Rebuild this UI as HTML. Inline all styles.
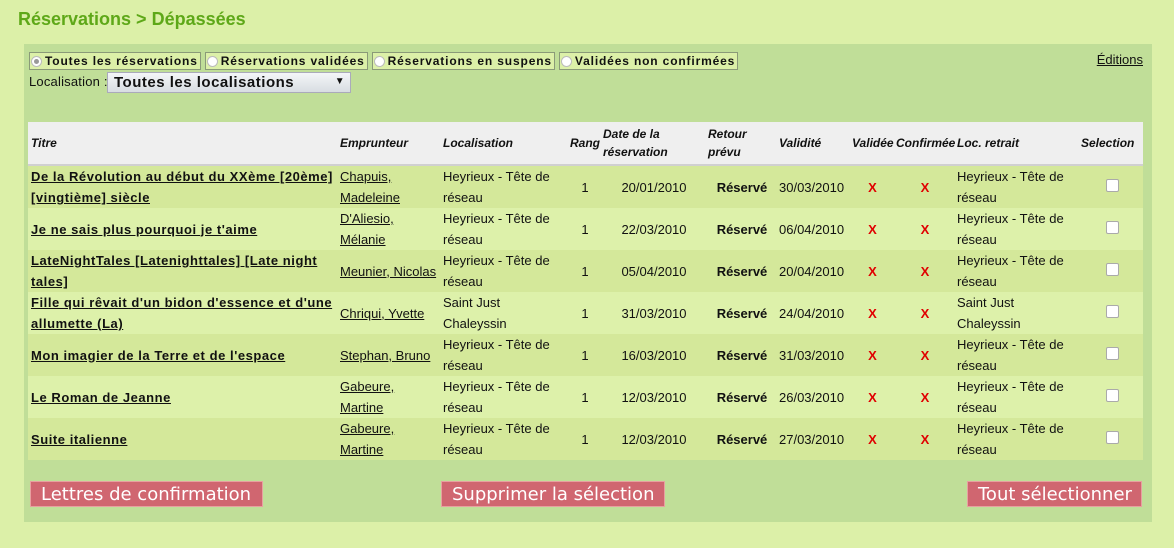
<!DOCTYPE html>
<html><head><meta charset="utf-8"><style>
body{margin:0;width:1174px;height:548px;background:#dcf0a8;font-family:"Liberation Sans",sans-serif;font-size:13px;color:#111;position:relative;overflow:hidden}
h1{position:absolute;left:18px;top:9px;margin:0;font-size:18px;color:#5ea818;font-weight:bold}
.panel{position:absolute;left:24px;top:44px;width:1128px;height:478px;background:#c0de98}
.tabs{position:absolute;left:5px;top:8px;display:flex;gap:4px}
.tab{border:1px solid #8a9a78;background:#dcf0a8;height:16px;line-height:16px;font-size:12px;font-weight:bold;padding:0 2px 0 1px;display:flex;align-items:center;letter-spacing:.85px}
.rad{width:11px;height:11px;border-radius:50%;background:#fff;border:1px solid #bbb;margin-right:3px;box-sizing:border-box;position:relative}
.rad.on::after{content:"";position:absolute;left:2px;top:2px;width:5px;height:5px;border-radius:50%;background:#999}
.loc{position:absolute;left:5px;top:30px;font-size:13px;letter-spacing:.2px}
.sel{position:absolute;left:83px;top:28px;width:244px;height:21px;background:linear-gradient(#f4f6f8,#d8dde2);border:1px solid #aab;box-sizing:border-box;font-size:15px;font-weight:bold;line-height:19px;padding-left:6px;letter-spacing:.5px}
.sel span{position:absolute;right:2px;top:1px;width:16px;height:16px;font-size:10px;line-height:16px;text-align:center}
.ed{position:absolute;right:9px;top:8px;text-decoration:underline;font-size:13px}
table{position:absolute;left:4px;top:78px;border-collapse:collapse;width:1115px;table-layout:fixed}
th{background:#efefef;font-style:italic;font-size:12px;text-align:left;height:42px;padding:0 0 0 3px;border-bottom:2px solid #d0d0d0;line-height:18px}
td{height:42px;padding:0 0 0 3px;line-height:21px;font-size:13px}
tr.a td{background:#d4e89a}tr.b td{background:#ddf1aa}
.t{font-weight:bold;text-decoration:underline;letter-spacing:.55px}
.u{text-decoration:underline}
.c{text-align:center}
.x{color:#e00000;font-weight:bold;text-align:center}
.cb{display:inline-block;width:11px;height:11px;background:#fff;border:1px solid #aaa;border-radius:2px}
.btn{position:absolute;top:437px;height:26px;background:#d06670;color:#fff;font-family:"DejaVu Sans",sans-serif;font-size:18px;line-height:26px;padding:0 10px;border:1px solid #e8a0a0;box-sizing:border-box;white-space:nowrap}
</style></head><body>
<h1>Réservations &gt; Dépassées</h1>
<div class="panel">
<div class="tabs">
<div class="tab"><span class="rad on"></span>Toutes les réservations</div>
<div class="tab"><span class="rad"></span>Réservations validées</div>
<div class="tab"><span class="rad"></span>Réservations en suspens</div>
<div class="tab"><span class="rad"></span>Validées non confirmées</div>
</div>
<div class="ed">Éditions</div>
<div class="loc">Localisation :</div>
<div class="sel">Toutes les localisations<span>▼</span></div>
<table>
<colgroup><col style="width:309px"><col style="width:103px"><col style="width:127px"><col style="width:33px"><col style="width:105px"><col style="width:71px"><col style="width:73px"><col style="width:44px"><col style="width:61px"><col style="width:124px"><col style="width:65px"></colgroup>
<tr><th>Titre</th><th>Emprunteur</th><th>Localisation</th><th>Rang</th><th>Date de la<br>réservation</th><th>Retour<br>prévu</th><th>Validité</th><th>Validée</th><th>Confirmée</th><th>Loc. retrait</th><th>Selection</th></tr>
<tr class="a"><td class="t">De la Révolution au début du XXème [20ème] [vingtième] siècle</td><td class="u">Chapuis, Madeleine</td><td>Heyrieux - Tête de réseau</td><td class="c">1</td><td class="c">20/01/2010</td><td class="c"><b>Réservé</b></td><td>30/03/2010</td><td class="x">X</td><td class="x">X</td><td>Heyrieux - Tête de réseau</td><td class="c"><span class="cb"></span></td></tr>
<tr class="b"><td class="t">Je ne sais plus pourquoi je t'aime</td><td class="u">D'Aliesio, Mélanie</td><td>Heyrieux - Tête de réseau</td><td class="c">1</td><td class="c">22/03/2010</td><td class="c"><b>Réservé</b></td><td>06/04/2010</td><td class="x">X</td><td class="x">X</td><td>Heyrieux - Tête de réseau</td><td class="c"><span class="cb"></span></td></tr>
<tr class="a"><td class="t">LateNightTales [Latenighttales] [Late night tales]</td><td class="u">Meunier, Nicolas</td><td>Heyrieux - Tête de réseau</td><td class="c">1</td><td class="c">05/04/2010</td><td class="c"><b>Réservé</b></td><td>20/04/2010</td><td class="x">X</td><td class="x">X</td><td>Heyrieux - Tête de réseau</td><td class="c"><span class="cb"></span></td></tr>
<tr class="b"><td class="t">Fille qui rêvait d'un bidon d'essence et d'une allumette (La)</td><td class="u">Chriqui, Yvette</td><td>Saint Just Chaleyssin</td><td class="c">1</td><td class="c">31/03/2010</td><td class="c"><b>Réservé</b></td><td>24/04/2010</td><td class="x">X</td><td class="x">X</td><td>Saint Just Chaleyssin</td><td class="c"><span class="cb"></span></td></tr>
<tr class="a"><td class="t">Mon imagier de la Terre et de l'espace</td><td class="u">Stephan, Bruno</td><td>Heyrieux - Tête de réseau</td><td class="c">1</td><td class="c">16/03/2010</td><td class="c"><b>Réservé</b></td><td>31/03/2010</td><td class="x">X</td><td class="x">X</td><td>Heyrieux - Tête de réseau</td><td class="c"><span class="cb"></span></td></tr>
<tr class="b"><td class="t">Le Roman de Jeanne</td><td class="u">Gabeure, Martine</td><td>Heyrieux - Tête de réseau</td><td class="c">1</td><td class="c">12/03/2010</td><td class="c"><b>Réservé</b></td><td>26/03/2010</td><td class="x">X</td><td class="x">X</td><td>Heyrieux - Tête de réseau</td><td class="c"><span class="cb"></span></td></tr>
<tr class="a"><td class="t">Suite italienne</td><td class="u">Gabeure, Martine</td><td>Heyrieux - Tête de réseau</td><td class="c">1</td><td class="c">12/03/2010</td><td class="c"><b>Réservé</b></td><td>27/03/2010</td><td class="x">X</td><td class="x">X</td><td>Heyrieux - Tête de réseau</td><td class="c"><span class="cb"></span></td></tr>
</table>
<div class="btn" style="left:6px;width:233px">Lettres de confirmation</div>
<div class="btn" style="left:417px;width:224px">Supprimer la sélection</div>
<div class="btn" style="left:943px;width:175px">Tout sélectionner</div>
</div>
</body></html>
